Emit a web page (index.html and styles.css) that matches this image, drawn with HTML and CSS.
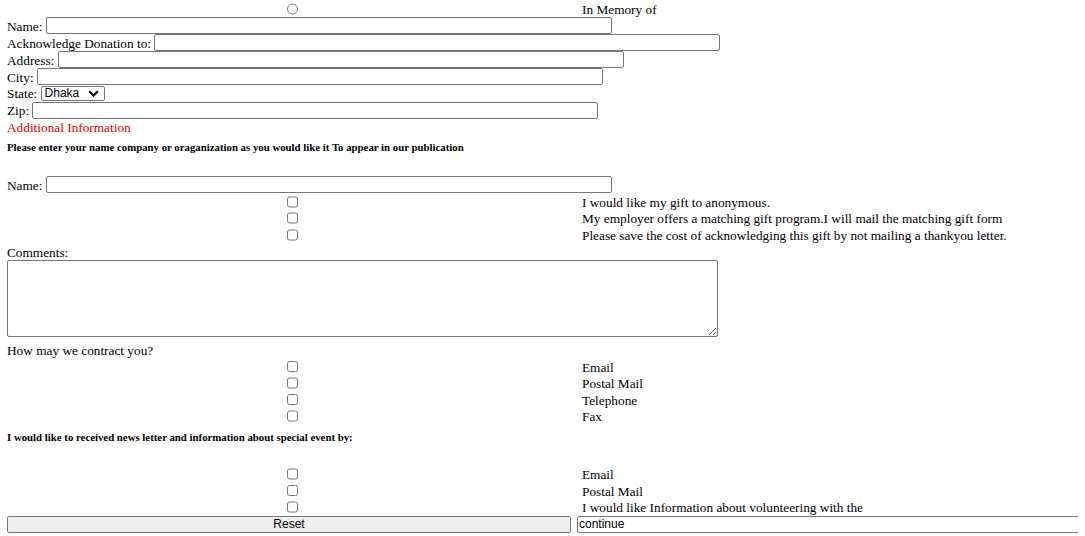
FILE: index.html
```html
<!DOCTYPE html>
<html>
<head>
<meta charset="utf-8">
<title>Donation Form</title>
<link rel="stylesheet" href="styles.css">
</head>
<body>
<form class="form">
  <div class="trow"><input class="check" type="radio" name="memory"><span class="opt">In Memory of</span></div>
  <div class="frow"><label>Name:</label><input class="text" type="text"></div>
  <div class="frow"><label>Acknowledge Donation to:</label><input class="text" type="text"></div>
  <div class="frow"><label>Address:</label><input class="text" type="text"></div>
  <div class="frow"><label>City:</label><input class="text" type="text"></div>
  <div class="srow"><label>State:</label><select class="state"><option>Dhaka</option><option>Chittagong</option><option>Khulna</option></select></div>
  <div class="frow"><label>Zip:</label><input class="text" type="text"></div>
  <div class="line red">Additional Information</div>
  <h6 class="note">Please enter your name company or oraganization as you would like it To appear in our publication</h6>
  <div class="frow"><label>Name:</label><input class="text" type="text"></div>
  <div class="trow"><input class="check" type="checkbox"><span class="opt">I would like my gift to anonymous.</span></div>
  <div class="trow"><input class="check" type="checkbox"><span class="opt">My employer offers a matching gift program.I will mail the matching gift form</span></div>
  <div class="trow"><input class="check" type="checkbox"><span class="opt">Please save the cost of acknowledging this gift by not mailing a thankyou letter.</span></div>
  <div class="line">Comments:</div>
  <textarea class="comments"></textarea>
  <div class="line">How may we contract you?</div>
  <div class="trow"><input class="check" type="checkbox"><span class="opt">Email</span></div>
  <div class="trow"><input class="check" type="checkbox"><span class="opt">Postal Mail</span></div>
  <div class="trow"><input class="check" type="checkbox"><span class="opt">Telephone</span></div>
  <div class="trow"><input class="check" type="checkbox"><span class="opt">Fax</span></div>
  <h6 class="note">I would like to received news letter and information about special event by:</h6>
  <div class="trow"><input class="check" type="checkbox"><span class="opt">Email</span></div>
  <div class="trow"><input class="check" type="checkbox"><span class="opt">Postal Mail</span></div>
  <div class="trow"><input class="check" type="checkbox"><span class="opt">I would like Information about volunteering with the</span></div>
  <div class="actions"><button class="reset" type="reset">Reset</button><input class="continue" type="text" value="continue"></div>
</form>
</body>
</html>
```
FILE: styles.css
```css
html {
  overflow: hidden;
}

body {
  margin: 0 7px;
  padding-top: 0.5px;
  font-family: "Liberation Serif", "Times New Roman", serif;
  font-size: 13.3px;
  color: #000;
  background: #fff;
}

.form {
  margin: 0;
}

.frow {
  display: flex;
  align-items: center;
  height: 17px;
  white-space: nowrap;
}

.frow label,
.srow label {
  padding-top: 2px;
}

.srow {
  display: flex;
  align-items: center;
  height: 16.56px;
  white-space: nowrap;
}

.text {
  margin: 0 0 0 3.3px;
  width: 566px;
  height: 17px;
  box-sizing: border-box;
  border: 1px solid #767676;
  border-radius: 2px;
  padding: 1px 2px;
  font: 12px "Liberation Sans", Arial, sans-serif;
  background: #fff;
}

.state {
  -webkit-appearance: none;
  appearance: none;
  margin: 0 0 0 3.3px;
  width: 64px;
  height: 15px;
  box-sizing: border-box;
  border: 1px solid #767676;
  border-radius: 2px;
  padding: 0 0 0 3px;
  font: 12px "Liberation Sans", Arial, sans-serif;
  line-height: 13px;
  color: #000;
  background: #fff url("data:image/svg+xml;utf8,<svg xmlns='http://www.w3.org/2000/svg' width='11' height='7' viewBox='0 0 11 7'><path d='M1.2 1.2l4.3 4.3 4.3-4.3' fill='none' stroke='black' stroke-width='2.2'/></svg>") no-repeat right 5px center;
}

.line {
  height: 16.56px;
  box-sizing: border-box;
  padding-top: 1.5px;
  line-height: 16.56px;
  white-space: nowrap;
}

.red {
  color: #e00000;
}

.note {
  margin: 7.3px 0 23px;
  font-size: 10.8px;
  line-height: 11px;
  font-weight: bold;
  white-space: nowrap;
}

.trow {
  display: grid;
  grid-template-columns: 570px 1fr;
  grid-template-rows: 16.56px;
  height: 16.56px;
}

.check {
  justify-self: center;
  align-self: center;
  margin: 0 0 0 1px;
  width: 11.7px;
  height: 11.7px;
}

.opt {
  align-self: stretch;
  box-sizing: border-box;
  padding-left: 5px;
  padding-top: 1.5px;
  line-height: 16.56px;
  white-space: nowrap;
}

.comments {
  display: block;
  margin: 0.5px 0 4.6px;
  width: 711px;
  height: 77px;
  box-sizing: border-box;
  border: 1px solid #767676;
  border-radius: 2px;
  padding: 2px;
  font: 12px "Liberation Mono", monospace;
}

.actions {
  display: flex;
  gap: 6px;
  height: 17px;
  margin-top: 0.5px;
}

.reset {
  flex: none;
  margin: 0;
  width: 564px;
  height: 17px;
  box-sizing: border-box;
  border: 1px solid #767676;
  border-radius: 2px;
  background: #efefef;
  padding: 0;
  font: 12px "Liberation Sans", Arial, sans-serif;
  color: #000;
}

.continue {
  flex: none;
  margin: 0;
  width: 600px;
  height: 17px;
  box-sizing: border-box;
  border: 1px solid #767676;
  border-radius: 2px;
  padding: 1px 1px;
  font: 12px "Liberation Sans", Arial, sans-serif;
  color: #000;
}
```
